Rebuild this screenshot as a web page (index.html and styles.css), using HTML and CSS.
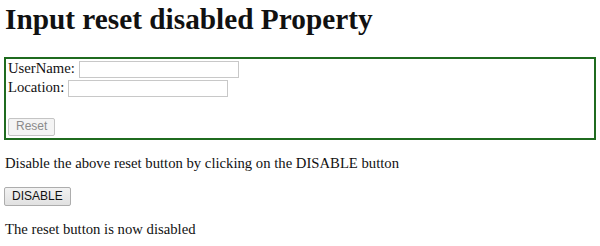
FILE: index.html
```html
<!DOCTYPE html>
<html lang="en">
<head>
  <meta charset="UTF-8" />
  <title>Input reset disabled Property</title>
  <link rel="stylesheet" href="styles.css">
</head>
<body>
  <h1>Input reset disabled Property</h1>
  <form class="box">
    UserName: <input type="text" class="field"><br>
    Location: <input type="text" class="field"><br>
    <br>
    <input type="reset" class="btn" value="Reset" disabled>
  </form>
  <p>Disable the above reset button by clicking on the DISABLE button</p>
  <button class="btn">DISABLE</button>
  <p class="status">The reset button is now disabled</p>
</body>
</html>
```

FILE: styles.css
```css
body {
  margin: 0 4px;
  font-family: "Liberation Serif", "Times New Roman", serif;
  font-size: 14.7px;
  color: #111;
  background: #fff;
}
h1 {
  font-size: 29.3px;
  margin: 2px 0 21px 1px;
  line-height: 34px;
}
.box {
  border: 2px solid #1f6b1f;
  padding: 0 3px 2px 2px;
  line-height: 19px;
}
.field {
  width: 160px;
  height: 17px;
  box-sizing: border-box;
  border: 1px solid #c8c8c8;
  margin: 0;
  padding: 0;
  vertical-align: middle;
}
.btn {
  font-family: "Liberation Sans", Arial, sans-serif;
  font-size: 12px;
  padding: 0 7px;
  border: 1px solid #adadad;
  border-radius: 2px;
  background: linear-gradient(#f2f2f2, #e1e1e1);
  color: #111;
  height: 19px;
  line-height: 15px;
  vertical-align: middle;
}
.box .btn {
  height: 18px;
}
.btn:disabled {
  color: #8a8a8a;
  border-color: #c4c4c4;
  background: #f4f4f4;
}
p {
  margin: 15px 1px;
}
.status {
  margin-bottom: 0;
}
```
